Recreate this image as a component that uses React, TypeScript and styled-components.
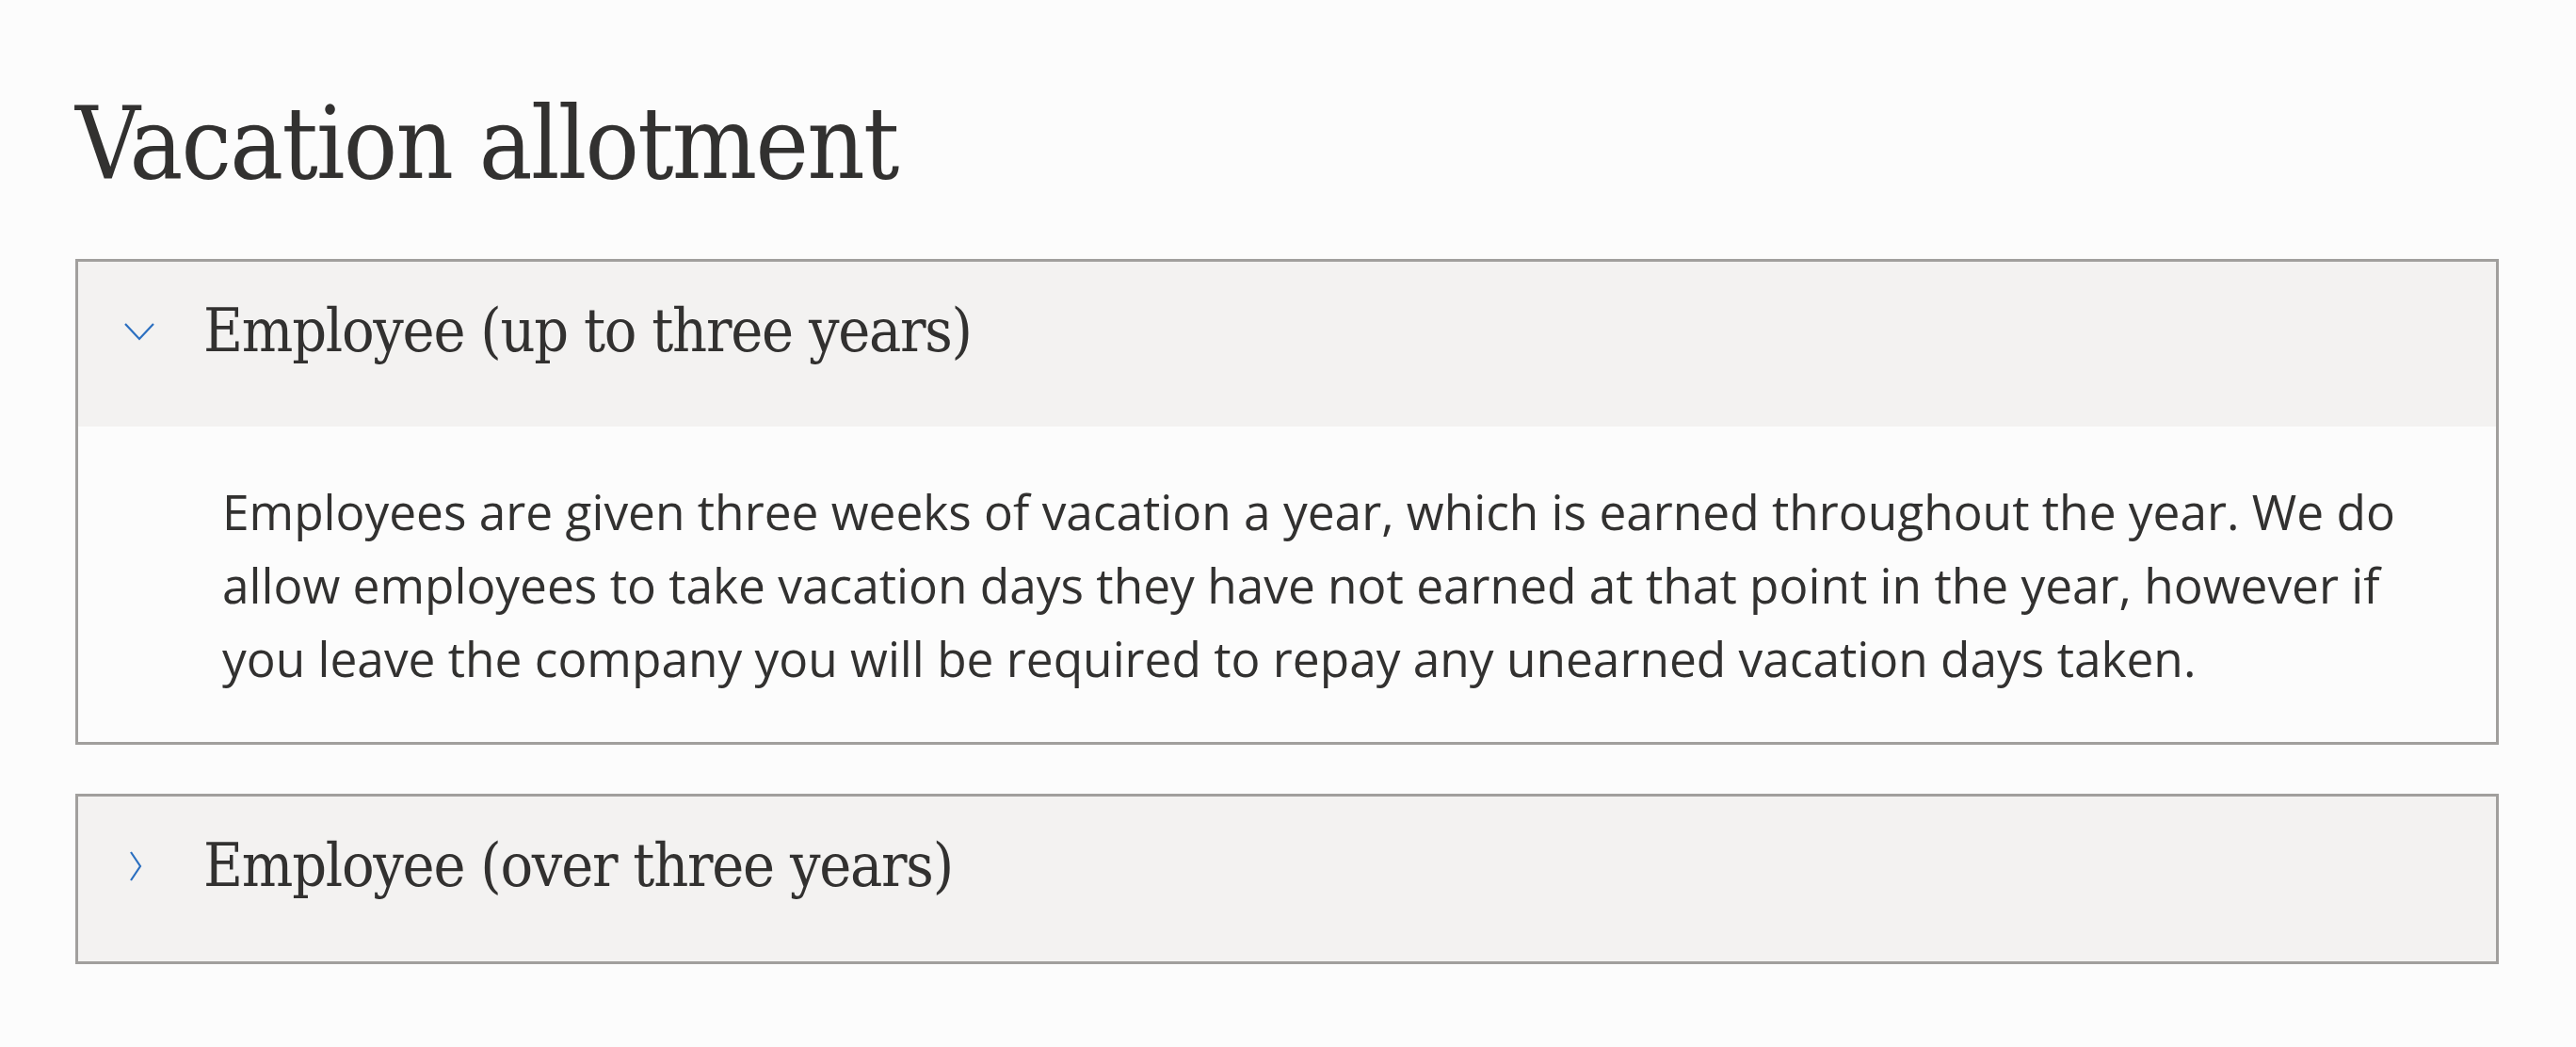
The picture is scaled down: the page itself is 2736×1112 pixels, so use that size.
import React, { useState } from "react"
import styled, { createGlobalStyle } from "styled-components"

const GlobalStyle = createGlobalStyle`
  html, body {
    margin: 0;
    padding: 0;
    background: #fcfcfc;
  }
`

interface Section {
  title: string
  body: string
}

const sections: Section[] = [
  {
    title: "Employee (up to three years)",
    body: `Employees are given three weeks of vacation a year, which is earned throughout the year. We do allow employees to take vacation days they have not earned at that point in the year, however if you leave the company you will be required to repay any unearned vacation days taken.`,
  },
  {
    title: "Employee (over three years)",
    body: `Employees are given four weeks of vacation a year, which is earned throughout the year.`,
  },
]

const Page = styled.main`
  padding: 100px 82px 40px 80px;
  color: #323130;
`

const Title = styled.h1`
  margin: 0 0 69px;
  font-family: "DejaVu Serif", "Liberation Serif", serif;
  font-stretch: condensed;
  font-weight: 400;
  font-size: 106px;
  letter-spacing: -1.7px;
  line-height: 1;
  color: #323130;
`

const List = styled.div`
  display: flex;
  flex-direction: column;
  gap: 52px;
`

const Panel = styled.section`
  border: 3px solid #a19f9d;
  background: #fcfcfc;
`

const Header = styled.button`
  display: flex;
  align-items: center;
  gap: 52px;
  width: 100%;
  height: 175px;
  padding: 0 0 28px 49px;
  border: 0;
  background: #f3f2f1;
  cursor: pointer;
  text-align: left;
  color: #323130;
`

const HeaderText = styled.span`
  font-family: "DejaVu Serif", "Liberation Serif", serif;
  font-stretch: condensed;
  font-size: 64px;
  letter-spacing: -1.25px;
  line-height: 75px;
`

const Chevron = styled.svg`
  flex: none;
  width: 32px;
  height: 32px;
`

const Body = styled.div`
  padding: 51px 50px 50px 153px;
  font-family: "Open Sans", sans-serif;
  font-size: 51.4px;
  line-height: 78px;
  color: #323130;
`

const ChevronIcon = ({ open }: { open: boolean }) => (
  <Chevron viewBox="0 0 32 32" fill="none" stroke="#2b6fc0" strokeWidth="2.2">
    {open ? (
      <polyline points="1,8 16,24 31,8" />
    ) : (
      <polyline points="7,1 17,16 7,31" />
    )}
  </Chevron>
)

const AccordionItem = ({ section, defaultOpen }: { section: Section; defaultOpen: boolean }) => {
  const [open, setOpen] = useState(defaultOpen)
  return (
    <Panel>
      <Header onClick={() => setOpen(!open)} aria-expanded={open}>
        <ChevronIcon open={open} />
        <HeaderText>{section.title}</HeaderText>
      </Header>
      {open && <Body>{section.body}</Body>}
    </Panel>
  )
}

const App = () => (
  <Page>
    <GlobalStyle />
    <Title>Vacation allotment</Title>
    <List>
      {sections.map((section, i) => (
        <AccordionItem key={section.title} section={section} defaultOpen={i === 0} />
      ))}
    </List>
  </Page>
)

export default App
